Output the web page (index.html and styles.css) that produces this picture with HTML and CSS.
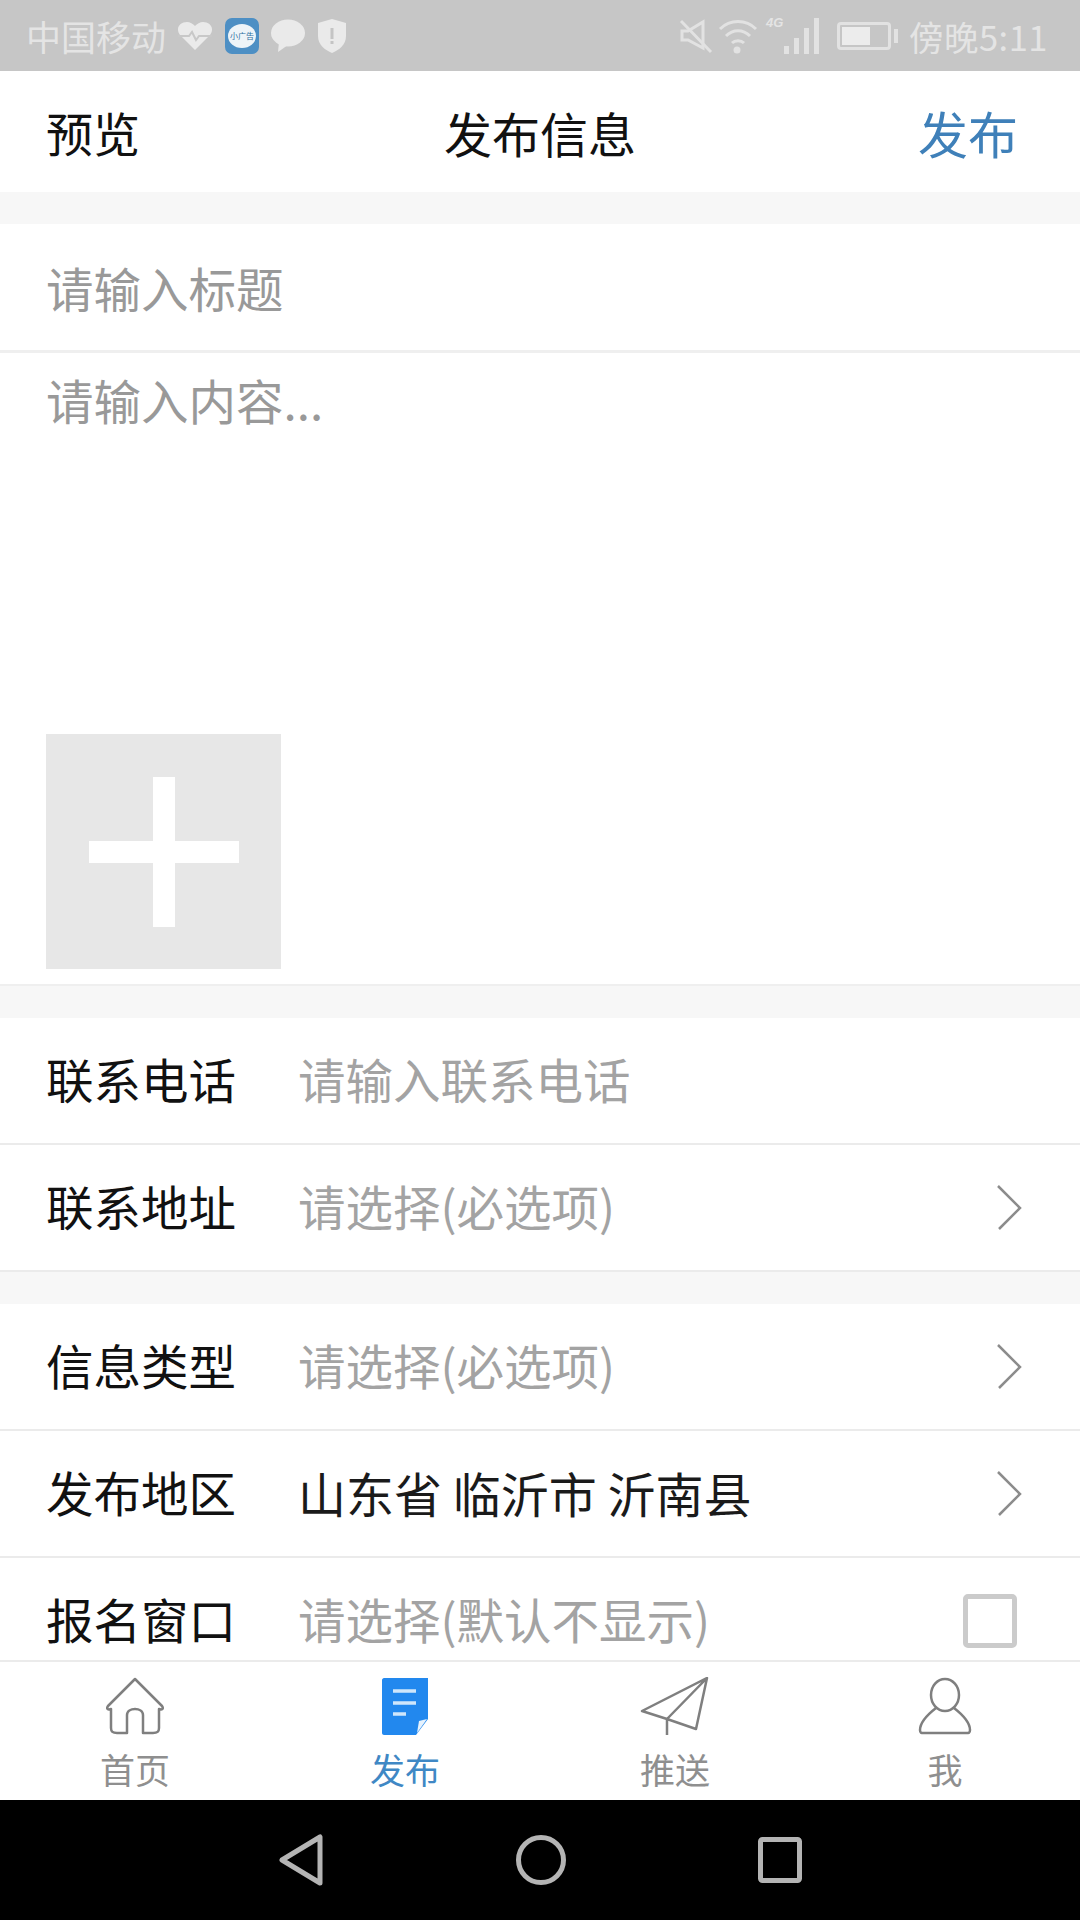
FILE: index.html
```html
<!DOCTYPE html>
<html lang="zh-CN">
<head>
<meta charset="UTF-8">
<meta name="viewport" content="width=device-width, initial-scale=1.0">
<title>发布信息</title>
<link rel="stylesheet" href="styles.css">
</head>
<body>

<div class="phone">
  <div class="status-bar">
    <div class="status-left">
      <span class="carrier">中国移动</span>
      <svg class="s-heart" width="36" height="30" viewBox="0 0 36 30">
        <path d="M18 29 L3 14 C-2 7 3 1 10 1 C13 1 16 3 18 5 C20 3 23 1 26 1 C33 1 38 7 33 14 Z" fill="#eaeaea"/>
        <path d="M1 15 H12 L15 11 L19 19 L22 15 H35" fill="none" stroke="#c8c8c8" stroke-width="2"/>
      </svg>
      <div class="s-app"><span class="s-app-face">小广告</span></div>
      <svg class="s-bubble" width="34" height="34" viewBox="0 0 34 34">
        <ellipse cx="17" cy="14" rx="17" ry="13.500" fill="#eaeaea"/>
        <path d="M8 23 L7 33 L17 26 Z" fill="#eaeaea"/>
      </svg>
      <svg class="s-shield" width="30" height="36" viewBox="0 0 30 36">
        <path d="M15 1 L29 5 V18 C29 27 22 32 15 35 C8 32 1 27 1 18 V5 Z" fill="#eaeaea"/>
        <rect x="13.500" y="10" width="3" height="11" fill="#c4c4c4"/>
        <rect x="13.500" y="23" width="3" height="3" fill="#c4c4c4"/>
      </svg>
    </div>
    <div class="status-right">
      <svg class="s-mute" width="34" height="36" viewBox="0 0 34 36">
        <path d="M3 13 H9 L24 4 V30 L9 22 H3 Z" fill="none" stroke="#e2e2e2" stroke-width="3"/>
        <path d="M2 3 L32 34" stroke="#e2e2e2" stroke-width="3"/>
      </svg>
      <svg class="s-wifi" width="40" height="36" viewBox="0 0 40 36">
        <path d="M2 11 C12 1 28 1 38 11 M8 18 C15 11 25 11 32 18 M14 25 C17 22 23 22 26 25" fill="none" stroke="#e2e2e2" stroke-width="3"/>
        <circle cx="19" cy="32" r="3.500" fill="#e2e2e2"/>
      </svg>
      <div class="s-signal">
        <span class="s-4g">4G</span>
        <span class="bar bar-1"></span>
        <span class="bar bar-2"></span>
        <span class="bar bar-3"></span>
        <span class="bar bar-4"></span>
      </div>
      <div class="s-battery"><div class="s-battery-level"></div></div>
      <div class="s-battery-tip"></div>
      <span class="clock">傍晚5:11</span>
    </div>
  </div>

  <header class="top-bar">
    <span class="top-left">预览</span>
    <span class="top-title">发布信息</span>
    <span class="top-right">发布</span>
  </header>

  <main class="form">
    <div class="title-row">请输入标题</div>
    <div class="content-box">
      <div class="content-hint">请输入内容...</div>
      <div class="add-photo">
        <svg width="150" height="150" viewBox="0 0 150 150">
          <rect x="64" y="0" width="22" height="150" fill="#fff"/>
          <rect x="0" y="64" width="150" height="22" fill="#fff"/>
        </svg>
      </div>
    </div>

    <section class="group">
      <div class="row">
        <span class="label">联系电话</span>
        <span class="hint">请输入联系电话</span>
      </div>
      <div class="row">
        <span class="label">联系地址</span>
        <span class="hint">请选择(必选项)</span>
        <svg class="arrow" width="26" height="46" viewBox="0 0 26 46"><path d="M2 1 L24 23 L3 44" fill="none" stroke="#8c8c8c" stroke-width="2.500"/></svg>
      </div>
    </section>

    <section class="group">
      <div class="row">
        <span class="label">信息类型</span>
        <span class="hint">请选择(必选项)</span>
        <svg class="arrow" width="26" height="46" viewBox="0 0 26 46"><path d="M2 1 L24 23 L3 44" fill="none" stroke="#8c8c8c" stroke-width="2.500"/></svg>
      </div>
      <div class="row">
        <span class="label">发布地区</span>
        <span class="value">山东省 临沂市 沂南县</span>
        <svg class="arrow" width="26" height="46" viewBox="0 0 26 46"><path d="M2 1 L24 23 L3 44" fill="none" stroke="#8c8c8c" stroke-width="2.500"/></svg>
      </div>
      <div class="row">
        <span class="label">报名窗口</span>
        <span class="hint">请选择(默认不显示)</span>
        <div class="check"></div>
      </div>
    </section>
  </main>

  <nav class="tabs">
    <div class="tab">
      <svg width="62" height="58" viewBox="0 0 62 58">
        <path d="M31 2 L4 29 C2 32 4 33 7 32 V51 C7 55 9 56 13 56 H23 V38 C23 30 39 30 39 38 V56 H49 C53 56 55 55 55 51 V32 C58 33 60 32 58 29 Z" fill="none" stroke="#7f7f7f" stroke-width="2.500" stroke-linejoin="round"/>
      </svg>
      <span>首页</span>
    </div>
    <div class="tab tab-on">
      <svg width="46" height="58" viewBox="0 0 46 58">
        <path d="M2 1 H46 V42 L34 58 H2 C1 58 0 57 0 56 V3 C0 2 1 1 2 1 Z" fill="#2288ee"/>
        <path d="M11 14 H34 M11 26 H34 M11 37 H24" stroke="#cfe6fb" stroke-width="3.500"/>
        <path d="M45 42 L35 56 L37 44 Z" fill="#e6f2fd"/>
      </svg>
      <span>发布</span>
    </div>
    <div class="tab">
      <svg width="70" height="58" viewBox="0 0 70 58">
        <path d="M67 1 L2 34 L27 42 L67 1 L56 52 L27 42 V58" fill="none" stroke="#7f7f7f" stroke-width="2.500" stroke-linejoin="round"/>
      </svg>
      <span>推送</span>
    </div>
    <div class="tab">
      <svg width="54" height="58" viewBox="0 0 54 58">
        <ellipse cx="27" cy="18" rx="14" ry="16" fill="none" stroke="#7f7f7f" stroke-width="2.500"/>
        <path d="M18 31 C9 38 2 46 2 53 C2 56 3 56 6 56 H48 C51 56 52 56 52 53 C52 46 45 38 36 31" fill="none" stroke="#7f7f7f" stroke-width="2.500"/>
      </svg>
      <span>我</span>
    </div>
  </nav>

  <div class="nav-bar">
    <svg width="46" height="52" viewBox="0 0 46 52">
      <path d="M42 3 V49 L4 26 Z" fill="none" stroke="#b4b4b4" stroke-width="5" stroke-linejoin="round"/>
    </svg>
    <svg width="50" height="50" viewBox="0 0 50 50">
      <circle cx="25" cy="25" r="22.500" fill="none" stroke="#b4b4b4" stroke-width="5"/>
    </svg>
    <svg width="44" height="46" viewBox="0 0 44 46">
      <rect x="2.500" y="2.500" width="39" height="41" rx="2" fill="none" stroke="#b4b4b4" stroke-width="5"/>
    </svg>
  </div>
</div>

</body>
</html>
```

FILE: styles.css
```css
* {
  box-sizing: border-box;
}
body {
  margin: 0;
  padding: 0;
  background-color: #fff;
  font-family: "Noto Sans CJK SC", "Noto Sans", sans-serif;
}
.phone {
  width: 1080px;
  height: 1920px;
  display: flex;
  flex-direction: column;
  overflow: hidden;
}

/* status bar */
.status-bar {
  height: 71px;
  flex: none;
  background-color: #c6c6c6;
  color: #e4e4e4;
  display: flex;
  justify-content: space-between;
  align-items: center;
  padding: 0 32px 0 26px;
}
.status-left, .status-right {
  display: flex;
  align-items: center;
}
.carrier {
  font-size: 35px;
  line-height: 40px;
  margin-right: 11px;
}
.s-heart {
  margin-right: 12px;
}
.s-app {
  width: 34px;
  height: 36px;
  background-color: #4d8fc4;
  border-radius: 7px;
  display: flex;
  align-items: center;
  justify-content: center;
  margin-right: 12px;
}
.s-app-face {
  width: 28px;
  height: 24px;
  border-radius: 50%;
  background-color: #eef4f8;
  color: #2f6f9f;
  font-size: 8px;
  line-height: 24px;
  text-align: center;
  white-space: nowrap;
}
.s-bubble {
  margin-right: 12px;
}
.s-mute {
  margin-right: 5px;
}
.s-wifi {
  margin-right: 8px;
}
.s-signal {
  width: 56px;
  height: 36px;
  position: relative;
  margin-right: 15px;
}
.s-4g {
  position: absolute;
  left: 0;
  top: -3px;
  font-size: 13px;
  font-style: italic;
  font-weight: 700;
  font-family: "Liberation Sans", sans-serif;
}
.bar {
  position: absolute;
  bottom: 0;
  width: 5px;
  background-color: #e2e2e2;
}
.bar-1 { left: 18px; height: 8px; }
.bar-2 { left: 28px; height: 16px; }
.bar-3 { left: 38px; height: 26px; }
.bar-4 { left: 48px; height: 36px; }
.s-battery {
  width: 54px;
  height: 28px;
  border: 3px solid #e2e2e2;
  border-radius: 4px;
  padding: 2px;
}
.s-battery-level {
  width: 28px;
  height: 100%;
  background-color: #ececec;
}
.s-battery-tip {
  width: 4px;
  height: 14px;
  background-color: #e2e2e2;
  margin: 0 11px 0 3px;
}
.clock {
  font-size: 34.500px;
  line-height: 40px;
  letter-spacing: 0.5px;
}

/* header */
.top-bar {
  height: 121px;
  flex: none;
  background-color: #fff;
  position: relative;
  display: flex;
  justify-content: space-between;
  align-items: center;
  padding: 0 62px 0 46px;
  color: #111;
  font-size: 47px;
}
.top-title {
  position: absolute;
  left: 0;
  right: 0;
  text-align: center;
  font-size: 48px;
}
.top-right {
  font-size: 50px;
  color: #3f80b9;
}

/* form */
.form {
  flex: 1;
  min-height: 0;
  overflow: hidden;
  background-color: #f7f7f7;
  padding-top: 32px;
}
.title-row {
  height: 129px;
  padding-left: 46px;
  display: flex;
  align-items: center;
  background-color: #fff;
  border-bottom: 3px solid #efefef;
  color: #999;
  font-size: 47.500px;
}
.content-box {
  height: 633px;
  background-color: #fff;
  padding: 15px 46px 15px;
  display: flex;
  flex-direction: column;
  justify-content: space-between;
  border-bottom: 2px solid #efefef;
}
.content-hint {
  color: #999;
  font-size: 47.500px;
  line-height: 64px;
}
.add-photo {
  width: 235px;
  height: 235px;
  background-color: #e7e7e7;
  display: flex;
  align-items: center;
  justify-content: center;
}
.group {
  background-color: #fff;
  margin-top: 32px;
}
.row {
  height: 127px;
  padding: 0 58px 4px 46px;
  display: flex;
  align-items: center;
  border-bottom: 2px solid #ebebeb;
  font-size: 47.500px;
}
.label {
  width: 252px;
  flex: none;
  color: #111;
}
.hint {
  flex: 1;
  color: #a3a3a3;
}
.value {
  flex: 1;
  color: #1a1a1a;
  font-size: 48px;
}
.arrow {
  margin-top: 4px;
}
.check {
  width: 54px;
  height: 54px;
  margin-top: 4px;
  margin-right: 5px;
  border: 5px solid #cbcbcb;
  border-radius: 5px;
}

/* bottom tabs */
.tabs {
  height: 140px;
  flex: none;
  background-color: #fff;
  border-top: 2px solid #ebebeb;
  display: flex;
  z-index: 1;
}
.tab {
  flex: 1;
  display: flex;
  flex-direction: column;
  align-items: center;
  color: #8f8f8f;
  font-size: 35px;
  line-height: 44px;
  padding-top: 15px;
  gap: 12px;
}
.tab-on {
  color: #3f88c5;
}

/* android nav */
.nav-bar {
  height: 120px;
  flex: none;
  background-color: #000;
  display: flex;
  align-items: center;
  justify-content: center;
  gap: 192px;
}
```
